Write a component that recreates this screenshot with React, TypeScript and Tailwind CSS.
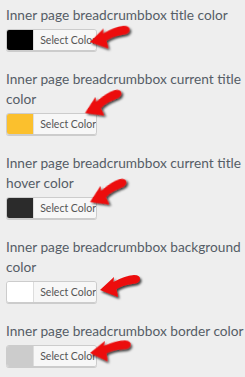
import React from "react";

const Arrow = ({ left, top, rot }: { left: number; top: number; rot: number }) => (
  <svg
    className="absolute pointer-events-none"
    style={{ left, top, transform: `rotate(${rot}deg)`, transformOrigin: "2px 18px" }}
    width="48"
    height="30"
    viewBox="0 0 48 30"
  >
    <defs>
      <filter id="sh" x="-30%" y="-30%" width="160%" height="180%">
        <feDropShadow dx="1.5" dy="2" stdDeviation="1.2" floodColor="#000" floodOpacity="0.75" />
      </filter>
    </defs>
    <path
      d="M2 18 L16 5 L15.5 10 Q26 4 36 3 Q42.5 3 42 7.5 Q41 11.5 34 12 Q25 13 18.5 17 L20 25 Z"
      fill="#ec0c0c"
      filter="url(#sh)"
    />
  </svg>
);

const items = [
  { lines: ["Inner page breadcrumbbox title color"], color: "#000000" },
  { lines: ["Inner page breadcrumbbox current title", "color"], color: "#fbc02d" },
  { lines: ["Inner page breadcrumbbox current title", "hover color"], color: "#2b2b2b" },
  { lines: ["Inner page breadcrumbbox background", "color"], color: "#ffffff" },
  { lines: ["Inner page breadcrumbbox border color"], color: "#cccccc" },
];

const arrows = [
  { left: 88, top: 24, rot: -2 },
  { left: 83, top: 95, rot: -14 },
  { left: 88, top: 184, rot: -14 },
  { left: 98, top: 272, rot: 0 },
  { left: 88, top: 335, rot: 4 },
];

export default function App() {
  return (
    <div
      className="relative w-[245px] h-[377px] bg-[#eeeeee] pt-[5px] pl-[6px] overflow-hidden"
      style={{ fontFamily: 'Lato, "Noto Sans", sans-serif' }}
    >
      {items.map((it, i) => (
        <div key={i} className="mb-[18px]">
          <div className="text-[13.7px] leading-[20px] font-normal text-[#555d66] mb-[4px] whitespace-nowrap">
            {it.lines.map((l, j) => (
              <div key={j}>{l}</div>
            ))}
          </div>
          <div className="flex h-[22px] w-[91px] border border-[#cccccc] rounded-[3px] shadow-[0_1px_0_#cccccc] overflow-hidden">
            <div className="w-[28px] h-full" style={{ backgroundColor: it.color }} />
            <div className="flex-1 bg-[#f7f7f7] border-l border-[#dddddd] text-[10.5px] leading-[20px] text-[#555555] pl-[6px] whitespace-nowrap">
              Select Color
            </div>
          </div>
        </div>
      ))}
      {arrows.map((a, i) => (
        <Arrow key={i} {...a} />
      ))}
    </div>
  );
}
